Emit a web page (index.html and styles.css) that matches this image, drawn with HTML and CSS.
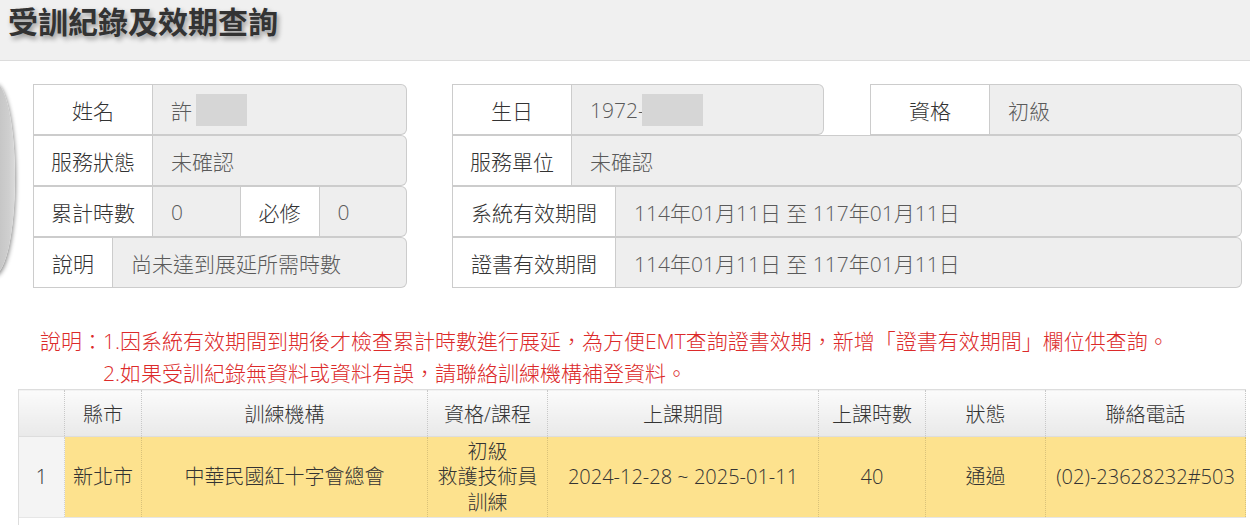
FILE: index.html
```html
<!DOCTYPE html>
<html lang="zh-Hant">
<head>
    <meta charset="UTF-8">
    <meta name="viewport" content="width=device-width, initial-scale=1.0">
    <title>受訓紀錄及效期查詢</title>
    <link rel="stylesheet" href="styles.css">
</head>
<body>
    <header class="page-head">
        <h1>受訓紀錄及效期查詢</h1>
    </header>

    <section class="info">
        <!-- edge of the photo frame, mostly off screen -->
        <div class="photo"></div>

        <div class="panel panel-left">
            <div class="field-row">
                <span class="addon wide">姓名</span>
                <span class="value">許<i class="mask mask-name"></i></span>
            </div>
            <div class="field-row">
                <span class="addon wide">服務狀態</span>
                <span class="value">未確認</span>
            </div>
            <div class="field-row">
                <span class="addon wide">累計時數</span>
                <span class="value">0</span>
                <span class="addon">必修</span>
                <span class="value">0</span>
            </div>
            <div class="field-row">
                <span class="addon">說明</span>
                <span class="value">尚未達到展延所需時數</span>
            </div>
        </div>

        <div class="panel panel-right">
            <div class="split">
                <div class="field-row">
                    <span class="addon wide">生日</span>
                    <span class="value">1972-<i class="mask mask-birth"></i></span>
                </div>
                <div class="field-row">
                    <span class="addon wide">資格</span>
                    <span class="value">初級</span>
                </div>
            </div>
            <div class="field-row">
                <span class="addon wide">服務單位</span>
                <span class="value">未確認</span>
            </div>
            <div class="field-row">
                <span class="addon">系統有效期間</span>
                <span class="value">114年01月11日 至 117年01月11日</span>
            </div>
            <div class="field-row">
                <span class="addon">證書有效期間</span>
                <span class="value">114年01月11日 至 117年01月11日</span>
            </div>
        </div>
    </section>

    <p class="notice">說明：1.因系統有效期間到期後才檢查累計時數進行展延，為方便EMT查詢證書效期，新增「證書有效期間」欄位供查詢。<br>2.如果受訓紀錄無資料或資料有誤，請聯絡訓練機構補登資料。</p>

    <table class="records">
        <colgroup>
            <col class="c-no">
            <col class="c-city">
            <col class="c-org">
            <col class="c-course">
            <col class="c-period">
            <col class="c-hours">
            <col class="c-state">
            <col class="c-phone">
        </colgroup>
        <thead>
            <tr>
                <th class="no"></th>
                <th>縣市</th>
                <th>訓練機構</th>
                <th>資格/課程</th>
                <th>上課期間</th>
                <th>上課時數</th>
                <th>狀態</th>
                <th>聯絡電話</th>
            </tr>
        </thead>
        <tbody>
            <tr class="hit">
                <td class="no">1</td>
                <td>新北市</td>
                <td>中華民國紅十字會總會</td>
                <td>初級<br>救護技術員<br>訓練</td>
                <td>2024-12-28 ~ 2025-01-11</td>
                <td>40</td>
                <td>通過</td>
                <td>(02)-23628232#503</td>
            </tr>
            <tr class="filler">
                <td class="no"></td>
                <td colspan="7"></td>
            </tr>
        </tbody>
    </table>
</body>
</html>
```

FILE: styles.css
```css
* {
    box-sizing: border-box;
}

body {
    margin: 0;
    font-family: "Open Sans", "Noto Sans CJK TC", sans-serif;
    font-size: 21px;
    font-weight: 300;
    color: #333;
    background: #fff;
    overflow: hidden;
}

.page-head {
    height: 61px;
    padding-left: 8px;
    background: #f0f0f0;
    border-bottom: 1px solid #dcdcdc;
}

.page-head h1 {
    margin: 0;
    font-size: 30px;
    line-height: 44px;
    font-weight: bold;
    color: #333;
    text-shadow: 2px 3px 5px rgba(0, 0, 0, 0.4);
}

/* info block */
.info {
    position: relative;
    display: flex;
    gap: 45px;
    margin-top: 23px;
    padding: 0 8px 0 33px;
}

.photo {
    position: absolute;
    left: -26px;
    top: -2px;
    width: 41px;
    height: 192px;
    border-radius: 50%;
    background: linear-gradient(90deg, #bdbdbd 40%, #cfcfcf 85%, #dadada);
    box-shadow: 1px 2px 4px rgba(0, 0, 0, 0.45);
}

.panel-left {
    flex: none;
    width: 374px;
}

.panel-right {
    flex: 1;
}

.split {
    display: flex;
    gap: 46px;
}

.split .field-row {
    flex: 1;
}

.field-row {
    display: flex;
    height: 51px;
}

.addon {
    flex: none;
    display: flex;
    align-items: center;
    justify-content: center;
    padding: 0 18px;
    background: #fff;
    border: 1px solid #ccc;
    white-space: nowrap;
}

.addon.wide {
    width: 120px;
    padding: 0;
}

.value {
    flex: 1;
    display: flex;
    align-items: center;
    padding: 0 18px;
    background: #eee;
    border: 1px solid #ccc;
    color: #5a5a5a;
    white-space: nowrap;
}

.field-row > * + * {
    border-left: 0;
}

.value:last-child {
    border-radius: 0 6px 6px 0;
}

.mask {
    display: inline-block;
    height: 32px;
    background: #d6d6d6;
}

.mask-name {
    width: 51px;
    margin-left: 4px;
}

.mask-birth {
    width: 61px;
    margin-left: -3px;
}

/* red notice */
.notice {
    margin: 37px 0 0;
    padding-left: 103px;
    text-indent: -63px;
    line-height: 32px;
    color: #dc2a2a;
}

/* records table */
.records {
    margin-left: 18px;
    width: 1227px;
    table-layout: fixed;
    border-collapse: collapse;
    font-size: 20px;
}

.c-no { width: 46px; }
.c-city { width: 77px; }
.c-org { width: 286px; }
.c-course { width: 120px; }
.c-period { width: 271px; }
.c-hours { width: 107px; }
.c-state { width: 120px; }
.c-phone { width: 200px; }

.records th {
    height: 47px;
    padding: 0;
    font-weight: 300;
    background: linear-gradient(#fbfbfb, #e9e9e9);
    border-top: 1px solid #ddd;
    border-bottom: 1px solid #ddd;
    border-right: 1px dotted #c8c8c8;
}

.records td {
    padding: 0;
    text-align: center;
    line-height: 25.5px;
    border-right: 1px dotted rgba(0, 0, 0, 0.14);
    white-space: nowrap;
}

.records .no {
    border-left: 1px solid #ddd;
}

.hit td {
    height: 81px;
    background: #fde28e;
}

.hit td.no {
    background: #f4f4f4;
}

.filler td {
    height: 30px;
    background: #fff;
    border-top: 1px solid #e6e6e6;
    border-right: 0;
}
```
